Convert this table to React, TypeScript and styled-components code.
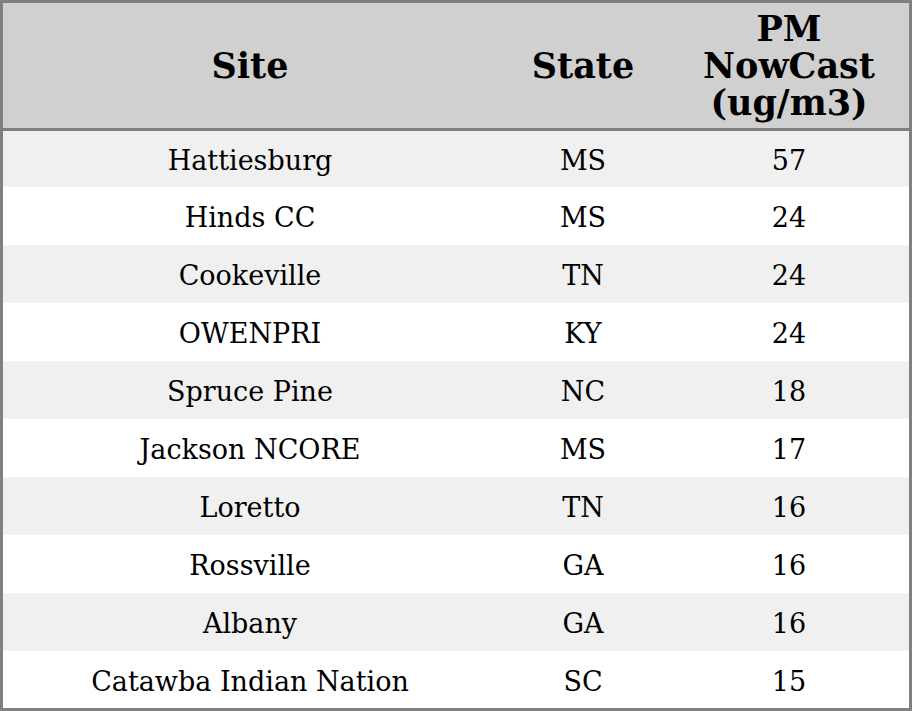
import React from 'react';
import styled, { createGlobalStyle } from 'styled-components';

const Global = createGlobalStyle`
  html, body {
    margin: 0;
    padding: 0;
    background: #ffffff;
  }
  body {
    font-family: 'DejaVu Serif', 'Liberation Serif', serif;
    color: #000;
  }
`;

const Table = styled.table`
  width: 912px;
  border: 3px solid #808080;
  border-collapse: separate;
  border-spacing: 0;
  table-layout: fixed;
  box-sizing: border-box;
`;

const HeadCell = styled.th<{ $w: number }>`
  width: ${(p) => p.$w}px;
  height: 125px;
  padding: 0;
  background: #d0d0d0;
  border-bottom: 3px solid #808080;
  font-size: 35px;
  font-weight: bold;
  line-height: 37px;
  text-align: center;
  vertical-align: middle;
`;

const Row = styled.tr`
  &:nth-child(odd) td {
    background: #f0f0f0;
  }
  &:nth-child(even) td {
    background: #ffffff;
  }
  &:first-child td {
    height: 52px;
  }
  &:last-child td {
    height: 53px;
  }
`;

const Cell = styled.td`
  height: 54px;
  padding: 4px 0 0;
  font-size: 27px;
  line-height: 30px;
  text-align: center;
  vertical-align: middle;
`;

const rows: [string, string, number][] = [
  ['Hattiesburg', 'MS', 57],
  ['Hinds CC', 'MS', 24],
  ['Cookeville', 'TN', 24],
  ['OWENPRI', 'KY', 24],
  ['Spruce Pine', 'NC', 18],
  ['Jackson NCORE', 'MS', 17],
  ['Loretto', 'TN', 16],
  ['Rossville', 'GA', 16],
  ['Albany', 'GA', 16],
  ['Catawba Indian Nation', 'SC', 15],
];

export default function App() {
  return (
    <>
      <Global />
      <Table>
        <thead>
          <tr>
            <HeadCell $w={494}>Site</HeadCell>
            <HeadCell $w={172}>State</HeadCell>
            <HeadCell $w={240}>
              PM
              <br />
              NowCast
              <br />
              (ug/m3)
            </HeadCell>
          </tr>
        </thead>
        <tbody>
          {rows.map(([site, state, pm]) => (
            <Row key={site}>
              <Cell>{site}</Cell>
              <Cell>{state}</Cell>
              <Cell>{pm}</Cell>
            </Row>
          ))}
        </tbody>
      </Table>
    </>
  );
}
